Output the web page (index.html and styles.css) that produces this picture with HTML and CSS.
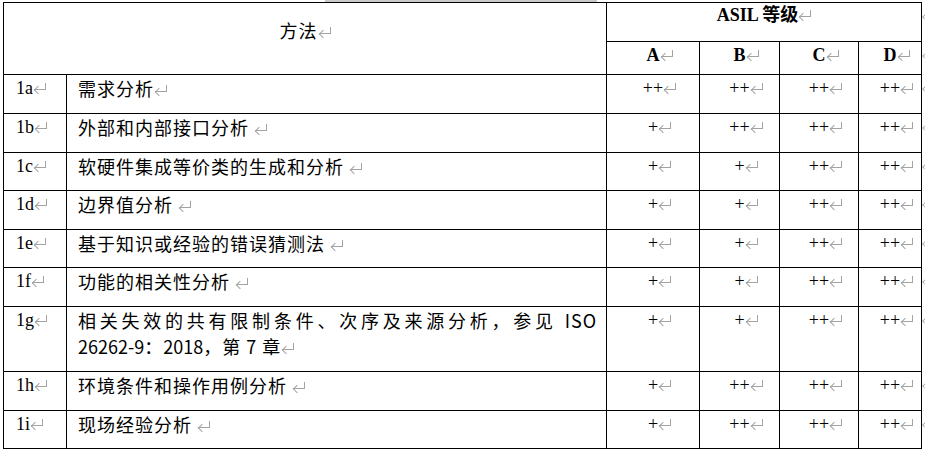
FILE: index.html
```html
<!DOCTYPE html>
<html lang="zh-CN">
<head>
<meta charset="utf-8">
<title>ASIL</title>
<link rel="stylesheet" href="styles.css">
</head>
<body>
<div class="topbar"><div class="shade"></div></div>
<div class="tbl">
  <div class="c hmethod">方法<span class="pm"></span></div>
  <div class="c hasil end">ASIL 等级<span class="pm"></span></div>
  <div class="c hl">A<span class="pm z"></span></div>
  <div class="c hl">B<span class="pm z"></span></div>
  <div class="c hl">C<span class="pm z"></span></div>
  <div class="c hl end">D<span class="pm z"></span></div>

  <div class="c id">1a<span class="pm"></span></div>
  <div class="c m">需求分析<span class="pm"></span></div>
  <div class="c v">++<span class="pm z"></span></div>
  <div class="c v">++<span class="pm z"></span></div>
  <div class="c v">++<span class="pm z"></span></div>
  <div class="c v end">++<span class="pm z"></span></div>

  <div class="c id">1b<span class="pm"></span></div>
  <div class="c m">外部和内部接口分析 <span class="pm"></span></div>
  <div class="c v">+<span class="pm z"></span></div>
  <div class="c v">++<span class="pm z"></span></div>
  <div class="c v">++<span class="pm z"></span></div>
  <div class="c v end">++<span class="pm z"></span></div>

  <div class="c id">1c<span class="pm"></span></div>
  <div class="c m">软硬件集成等价类的生成和分析 <span class="pm"></span></div>
  <div class="c v">+<span class="pm z"></span></div>
  <div class="c v">+<span class="pm z"></span></div>
  <div class="c v">++<span class="pm z"></span></div>
  <div class="c v end">++<span class="pm z"></span></div>

  <div class="c id">1d<span class="pm"></span></div>
  <div class="c m">边界值分析 <span class="pm"></span></div>
  <div class="c v">+<span class="pm z"></span></div>
  <div class="c v">+<span class="pm z"></span></div>
  <div class="c v">++<span class="pm z"></span></div>
  <div class="c v end">++<span class="pm z"></span></div>

  <div class="c id">1e<span class="pm"></span></div>
  <div class="c m">基于知识或经验的错误猜测法 <span class="pm"></span></div>
  <div class="c v">+<span class="pm z"></span></div>
  <div class="c v">+<span class="pm z"></span></div>
  <div class="c v">++<span class="pm z"></span></div>
  <div class="c v end">++<span class="pm z"></span></div>

  <div class="c id">1f<span class="pm"></span></div>
  <div class="c m">功能的相关性分析 <span class="pm"></span></div>
  <div class="c v">+<span class="pm z"></span></div>
  <div class="c v">+<span class="pm z"></span></div>
  <div class="c v">++<span class="pm z"></span></div>
  <div class="c v end">++<span class="pm z"></span></div>

  <div class="c id">1g<span class="pm"></span></div>
  <div class="c m just">相关失效的共有限制条件、次序及来源分析，参见 ISO <span class="lat">26262-9</span>：<span class="lat">2018</span>，第 7 章<span class="pm"></span></div>
  <div class="c v">+<span class="pm z"></span></div>
  <div class="c v">+<span class="pm z"></span></div>
  <div class="c v">++<span class="pm z"></span></div>
  <div class="c v end">++<span class="pm z"></span></div>

  <div class="c id">1h<span class="pm"></span></div>
  <div class="c m">环境条件和操作用例分析 <span class="pm"></span></div>
  <div class="c v">+<span class="pm z"></span></div>
  <div class="c v">++<span class="pm z"></span></div>
  <div class="c v">++<span class="pm z"></span></div>
  <div class="c v end">++<span class="pm z"></span></div>

  <div class="c id">1i<span class="pm"></span></div>
  <div class="c m">现场经验分析 <span class="pm"></span></div>
  <div class="c v">+<span class="pm z"></span></div>
  <div class="c v">++<span class="pm z"></span></div>
  <div class="c v">++<span class="pm z"></span></div>
  <div class="c v end">++<span class="pm z"></span></div>
</div>
</body>
</html>
```

FILE: styles.css
```css
html, body {
  margin: 0;
  padding: 0;
  background: #fff;
}

body {
  font-family: "Liberation Serif", "Noto Sans CJK SC", serif;
  font-size: 18px;
  color: #000;
}

.topbar {
  height: 2px;
}

.shade {
  margin-left: 325px;
  width: 272px;
  height: 2px;
  background: #c9c9c9;
}

.tbl {
  display: grid;
  grid-template-columns: 62px 539px 92px 79px 78px 62px;
  grid-template-rows: 38px 32px 38px 38px 37px 38px 37px 38px 64px 38px 37px;
  gap: 1px;
  background: #000;
  border: 1px solid #000;
  width: max-content;
  margin-left: 3px;
}

.c {
  background: #fff;
  line-height: 26px;
  position: relative;
}

/* Word paragraph mark, drawn with CSS strokes */
.pm {
  display: inline-block;
  position: relative;
  width: 11px;
  height: 6px;
  margin-left: 1px;
  border-right: 1px solid #a3a3a3;
  border-bottom: 1px solid #a3a3a3;
  vertical-align: 4px;
  letter-spacing: 0;
}

.pm::before {
  content: "";
  position: absolute;
  left: 1px;
  bottom: -4px;
  width: 5px;
  height: 5px;
  border-left: 1px solid #a3a3a3;
  border-bottom: 1px solid #a3a3a3;
  transform: rotate(45deg);
}

.pm.z {
  margin-right: -13px;
}

.end::after {
  content: "";
  position: absolute;
  left: calc(100% + 2px);
  top: 12px;
  width: 3px;
  height: 3px;
  border-left: 1px solid #b0b0b0;
  border-bottom: 1px solid #b0b0b0;
  transform: rotate(45deg);
}

.hmethod {
  grid-column: 1 / 3;
  grid-row: 1 / 3;
  text-align: center;
  padding-top: 14px;
  font-family: "Noto Sans CJK SC", sans-serif;
  letter-spacing: 1px;
}

.hasil {
  grid-column: 3 / 7;
  text-align: center;
  font-weight: bold;
  line-height: 24px;
}

.hl {
  text-align: center;
  font-weight: bold;
}

.id {
  padding-left: 12px;
}

.m {
  padding-left: 11px;
  padding-right: 9px;
  font-family: "Noto Sans CJK SC", sans-serif;
  letter-spacing: 1px;
}

.lat {
  letter-spacing: 0;
  white-space: nowrap;
}

.just {
  text-align: justify;
}

.v {
  text-align: center;
}
```
